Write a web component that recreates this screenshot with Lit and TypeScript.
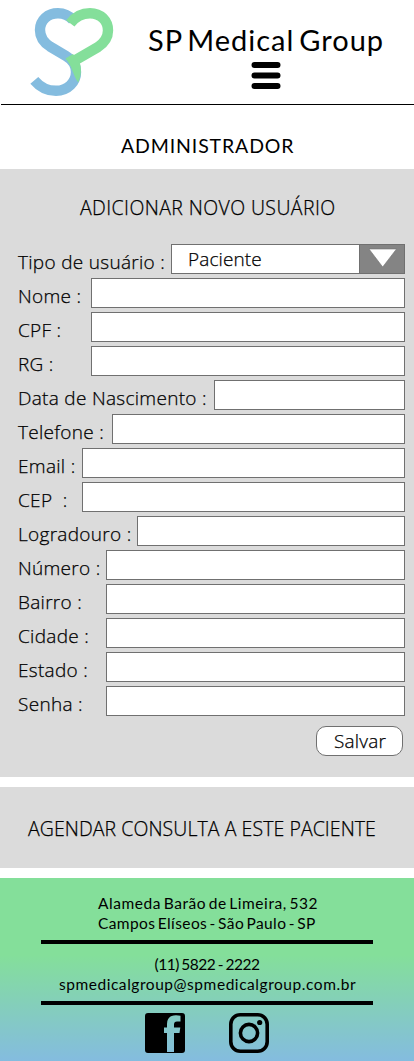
import { LitElement, html, css } from "lit";
import { customElement } from "lit/decorators.js";

interface Field { label: string; cls: string; }

const FIELDS: Field[] = [
  { label: "Nome :", cls: "w91" },
  { label: "CPF :", cls: "w91" },
  { label: "RG :", cls: "w91" },
  { label: "Data de Nascimento :", cls: "w214" },
  { label: "Telefone :", cls: "w112" },
  { label: "Email :", cls: "w82" },
  { label: "CEP\u00a0 :", cls: "w82" },
  { label: "Logradouro :", cls: "w137" },
  { label: "Número :", cls: "w106" },
  { label: "Bairro :", cls: "w106" },
  { label: "Cidade :", cls: "w106" },
  { label: "Estado :", cls: "w106" },
  { label: "Senha :", cls: "w106" },
];

@customElement("app-header")
class AppHeader extends LitElement {
  static styles = css`
    :host { display: block; font-family: Lato, sans-serif; color: #000; }
    .bar { display: flex; height: 104px; }
    .logo { display: block; width: 117px; height: 104px; flex: none; }
    .brand { flex: 1; display: flex; flex-direction: column; align-items: center; padding-top: 22px; }
    .name { font-size: 29px; line-height: 36px; white-space: nowrap; letter-spacing: 1px; word-spacing: -3.5px; width: 235px; }
    .menu { display: block; margin-top: 2px; width: 32px; height: 32px; }
    .rule { height: 1px; margin-left: 1px; background: #000; }
  `;
  render() {
    return html`
      <div class="bar">
        <svg class="logo" viewBox="0 0 117 104" fill="none" stroke-width="10.4">
          <path stroke="#84bcdf" d="M34.3 80.3C40 87 48 90.8 56 90.8C68 90.8 76 82 76 72C76 64 72 59.5 66 56L50 46.5C43 42 40 36 40 30C40 20 48 13.2 58 13.2C64 13.2 69 15.5 73 20" />
          <path stroke="#84df9a" d="M70.3 23.3C75 17 81 13.2 90 13.2C101 13.2 108 21 108 30.5C108 38 104 43 98 47L73 61.5" />
          <path fill="#84df9a" d="M65.5 58.5L73 54L79.5 62C82 69 81 76 78.3 82.5C72.5 75 73 67 65.5 58.5Z" />
        </svg>
        <div class="brand">
          <div class="name">SP Medical Group</div>
          <svg class="menu" viewBox="0 0 32 32" stroke="#000" stroke-width="6" stroke-linecap="round">
            <path d="M4.5 5H27.5M4.5 15.5H27.5M4.5 26H27.5" />
          </svg>
        </div>
      </div>
      <div class="rule"></div>
    `;
  }
}

@customElement("user-form")
class UserForm extends LitElement {
  static styles = css`
    :host { display: block; box-sizing: border-box; height: 608px; padding: 24px 9px 0 18px; background: #dbdbdb; color: #000;
      font-family: "Open Sans", "Noto Sans", sans-serif; font-weight: 300; font-size: 19px; line-height: 30px; -webkit-text-stroke: 0.25px #000; }
    .title { margin: 0 0 21px; padding-left: 62px; font-size: 19.5px; font-weight: 300; white-space: nowrap; letter-spacing: 0.4px; }
    .rows { display: grid; gap: 4px; }
    .row { display: flex; height: 30px; }
    .label { flex: none; box-sizing: border-box; padding-top: 3px; white-space: pre; letter-spacing: 0.3px; }
    .box { flex: 1; min-width: 0; box-sizing: border-box; border: 1px solid #707070; background: #fff; }
    .w82 { width: 64px; }
    .w91 { width: 73px; }
    .w106 { width: 88px; }
    .w112 { width: 94px; }
    .w137 { width: 119px; }
    .w171 { width: 153px; }
    .w214 { width: 196px; }
    .select { display: flex; line-height: 28px; }
    .value { flex: 1; padding-left: 16px; letter-spacing: 0.1px; }
    .arrow { flex: none; display: block; width: 44px; height: 28px; background: #848484; border-left: 1px solid #707070; }
    .save { display: block; box-sizing: border-box; margin: 10px 2px 0 auto; width: 87px; height: 30px; padding: 0 0 0 1px; border: 1px solid #707070; border-radius: 10px;
      background: #fff; color: #000; font: inherit; line-height: 28px; text-align: center; letter-spacing: 0.2px; -webkit-text-stroke: inherit; }
  `;
  render() {
    return html`
      <h2 class="title">ADICIONAR NOVO USUÁRIO</h2>
      <div class="rows">
        <div class="row">
          <span class="label w171">Tipo de usuário :</span>
          <div class="box select">
            <span class="value">Paciente</span>
            <svg class="arrow" viewBox="0 0 44 28"><path fill="#fff" stroke="#707070" stroke-width=".6" d="M9 4H36.5L22.7 22Z" /></svg>
          </div>
        </div>
        ${FIELDS.map((f) => html`<div class="row"><span class="label ${f.cls}">${f.label}</span><div class="box"></div></div>`)}
      </div>
      <button class="save">Salvar</button>
    `;
  }
}

@customElement("app-footer")
class AppFooter extends LitElement {
  static styles = css`
    :host { display: block; box-sizing: border-box; height: 183px; padding-top: 15px; color: #000;
      background: linear-gradient(#84df9a 0%, #84df9a 42%, #84bcdf 100%);
      font-family: Lato, sans-serif; font-size: 15.5px; line-height: 20px; white-space: nowrap; }
    .address { padding-left: 98px; }
    .a1 { letter-spacing: 0.57px; word-spacing: -2px; }
    .a2 { letter-spacing: 0.4px; word-spacing: -2px; }
    .contact { padding-top: 10px; text-align: center; }
    .c1 { letter-spacing: -0.5px; word-spacing: -1px; }
    .c2 { letter-spacing: 0.55px; padding-left: 1px; }
    .rule { height: 4px; margin: 6.5px 41px 0; background: #000; }
    .contact + .rule { margin-top: 7px; }
    .social { display: flex; gap: 44px; margin: 8.5px 0 0 145px; }
    .icon { display: block; width: 40px; height: 40px; }
  `;
  render() {
    return html`
      <div class="address">
        <div class="a1">Alameda Barão de Limeira, 532</div>
        <div class="a2">Campos Elíseos - São Paulo - SP</div>
      </div>
      <div class="rule"></div>
      <div class="contact">
        <div class="c1">(11) 5822 - 2222</div>
        <div class="c2">spmedicalgroup@spmedicalgroup.com.br</div>
      </div>
      <div class="rule"></div>
      <div class="social">
        <svg class="icon" viewBox="0 0 40 40">
          <path fill-rule="evenodd" d="M3 0H37Q40 0 40 3V37Q40 40 37 40H3Q0 40 0 37V3Q0 0 3 0ZM22 39H29V20H34.5L35.3 14.5H29V11.5Q29 8.5 32 8.5H35.5V2.7Q34 2.3 31 2.3Q22 2.3 22 11V14.5H19V20H22Z" />
        </svg>
        <svg class="icon" viewBox="0 0 40 40" fill="none" stroke="#000">
          <rect x="1.8" y="1.8" width="36.4" height="36.4" rx="9.5" stroke-width="3.6" />
          <circle cx="20" cy="20" r="8.6" stroke-width="3.6" />
          <circle cx="30.7" cy="9.5" r="2.6" fill="#000" stroke="none" />
        </svg>
      </div>
    `;
  }
}

@customElement("app-root")
class AppRoot extends LitElement {
  static styles = css`
    :host { display: block; width: 414px; height: 1061px; overflow: hidden; background: #fff; color: #000; }
    .heading { margin: 0; height: 64px; box-sizing: border-box; padding: 29px 0 0 121px; font: 400 19.5px/24px Lato, sans-serif; letter-spacing: 0.87px; white-space: nowrap; }
    .schedule { margin: 10px 0; height: 81px; box-sizing: border-box; padding: 27px 0 0 28px; background: #dbdbdb;
      font: 300 19.5px/30px "Open Sans", "Noto Sans", sans-serif; letter-spacing: 0.07px; white-space: nowrap; -webkit-text-stroke: 0.25px #000; }
  `;
  render() {
    return html`
      <app-header></app-header>
      <h1 class="heading">ADMINISTRADOR</h1>
      <user-form></user-form>
      <div class="schedule">AGENDAR CONSULTA A ESTE PACIENTE</div>
      <app-footer></app-footer>
    `;
  }
}
